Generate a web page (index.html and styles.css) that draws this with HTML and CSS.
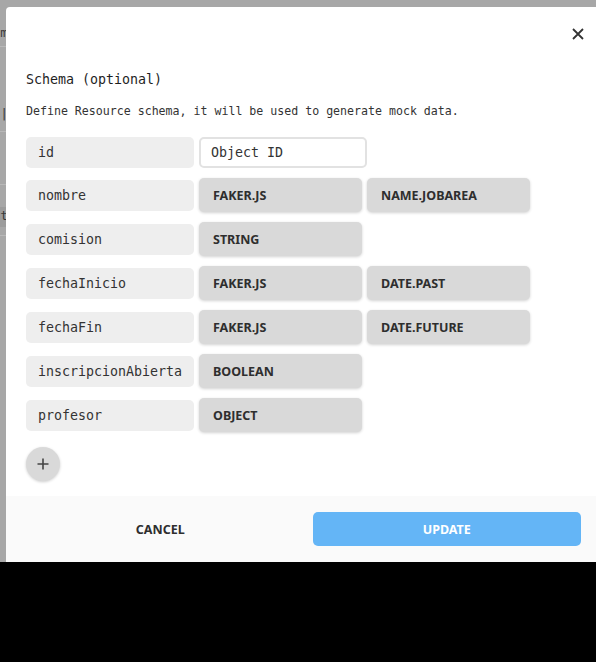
FILE: index.html
```html
<!DOCTYPE html>
<html>
<head>
<meta charset="utf-8">
<link rel="stylesheet" href="styles.css">
</head>
<body>
<div class="screen">
  <div class="strip">
    <div class="strip-item s1"><span>m</span></div>
    <div class="strip-line l1"></div>
    <div class="strip-item s2"><span>d|</span></div>
    <div class="strip-line l2"></div>
    <div class="strip-line l3"></div>
    <div class="strip-item s3"><span>t</span></div>
    <div class="strip-line l4"></div>
  </div>
  <div class="modal">
    <button class="close" aria-label="close">
      <svg width="14" height="14" viewBox="0 0 14 14"><path d="M2 2 L12 12 M12 2 L2 12" stroke="#333" stroke-width="1.8" fill="none"/></svg>
    </button>
    <div class="content">
      <h2 class="title">Schema (optional)</h2>
      <p class="desc">Define Resource schema, it will be used to generate mock data.</p>
      <div class="rows">
        <div class="row first">
          <div class="field">id</div>
          <div class="input">Object ID</div>
        </div>
        <div class="row">
          <div class="field">nombre</div>
          <div class="chip">FAKER.JS</div>
          <div class="chip">NAME.JOBAREA</div>
        </div>
        <div class="row">
          <div class="field">comision</div>
          <div class="chip">STRING</div>
        </div>
        <div class="row">
          <div class="field">fechaInicio</div>
          <div class="chip">FAKER.JS</div>
          <div class="chip">DATE.PAST</div>
        </div>
        <div class="row">
          <div class="field">fechaFin</div>
          <div class="chip">FAKER.JS</div>
          <div class="chip">DATE.FUTURE</div>
        </div>
        <div class="row">
          <div class="field">inscripcionAbierta</div>
          <div class="chip">BOOLEAN</div>
        </div>
        <div class="row">
          <div class="field">profesor</div>
          <div class="chip">OBJECT</div>
        </div>
      </div>
      <button class="add" aria-label="add">
        <svg width="14" height="14" viewBox="0 0 14 14"><path d="M7 1.5 V12.5 M1.5 7 H12.5" stroke="#444" stroke-width="1.6" fill="none"/></svg>
      </button>
    </div>
    <div class="footer">
      <button class="btn cancel">CANCEL</button>
      <button class="btn update">UPDATE</button>
    </div>
  </div>
</div>
</body>
</html>
```
FILE: styles.css
```css
html, body {
  margin: 0;
  padding: 0;
  background: #000;
  overflow: hidden;
}

.screen {
  display: flex;
  height: 562px;
  background: #a7a7a7;
}

.strip {
  width: 6px;
  flex: none;
  overflow: hidden;
  display: flex;
  flex-direction: column;
  font-family: "DejaVu Sans Mono", monospace;
  font-size: 13px;
  color: #3a3a3a;
}

.strip-item {
  display: flex;
  justify-content: flex-end;
  white-space: nowrap;
  height: 18px;
  line-height: 18px;
}

.strip-item span {
  margin-right: -2px;
}

.strip-line {
  height: 1px;
  background: #b8b8b8;
}

.s1 { margin-top: 24px; }
.l1 { margin-top: 4px; }
.s2 { margin-top: 58px; }
.l2 { margin-top: 8px; }
.l3 { margin-top: 52px; }
.s3 { margin-top: 22px; background: #9c9c9c; height: 20px; }
.l4 { margin-top: 8px; }

.modal {
  position: relative;
  flex: 1;
  margin-top: 7px;
  background: #fff;
  border-top-left-radius: 4px;
  display: flex;
  flex-direction: column;
}

.close {
  position: absolute;
  top: 20px;
  right: 11px;
  width: 14px;
  height: 14px;
  padding: 0;
  border: none;
  background: none;
  display: flex;
}

.content {
  flex: 1;
  padding: 63px 20px 0 20px;
  display: flex;
  flex-direction: column;
  align-items: flex-start;
}

.title {
  margin: 0;
  font-family: "DejaVu Sans Mono", monospace;
  font-size: 13.3px;
  line-height: 18px;
  font-weight: normal;
  color: #1e1e1e;
  padding-top: 1px;
}

.desc {
  margin: 14px 0 0 0;
  font-family: "DejaVu Sans Mono", monospace;
  font-size: 11.6px;
  line-height: 16px;
  color: #333;
}

.rows {
  margin-top: 18px;
  display: flex;
  flex-direction: column;
  gap: 10px;
}

.row {
  display: flex;
  align-items: center;
  gap: 5px;
  height: 34px;
}

.row.first {
  height: 31px;
}

.field {
  width: 168px;
  height: 31px;
  box-sizing: border-box;
  padding: 0 12px;
  background: #eeeeee;
  border-radius: 5px;
  display: flex;
  align-items: center;
  font-family: "DejaVu Sans Mono", monospace;
  font-size: 13.3px;
  color: #333;
  white-space: nowrap;
  overflow: hidden;
}

.input {
  width: 168px;
  height: 31px;
  box-sizing: border-box;
  padding: 0 10px;
  background: #fff;
  border: 2px solid #e2e2e2;
  border-radius: 5px;
  display: flex;
  align-items: center;
  font-family: "DejaVu Sans Mono", monospace;
  font-size: 13.3px;
  color: #333;
}

.chip {
  width: 163px;
  height: 34px;
  box-sizing: border-box;
  padding: 0 14px;
  background: #d9d9d9;
  border-radius: 5px;
  box-shadow: 0 1px 3px rgba(0, 0, 0, 0.18);
  display: flex;
  align-items: center;
  font-family: "Noto Sans", sans-serif;
  font-size: 12.5px;
  font-weight: 700;
  color: #2e2e2e;
}

.add {
  margin-top: 15px;
  width: 34px;
  height: 34px;
  border-radius: 50%;
  border: none;
  padding: 0;
  background: #d9d9d9;
  box-shadow: 0 1px 3px rgba(0, 0, 0, 0.2);
  display: flex;
  align-items: center;
  justify-content: center;
}

.footer {
  height: 66px;
  flex: none;
  background: #fafafa;
  display: flex;
  align-items: center;
  gap: 18px;
  padding: 0 15px 0 20px;
}

.btn {
  flex: 1;
  height: 34px;
  border: none;
  border-radius: 5px;
  font-family: "Noto Sans", sans-serif;
  font-size: 12.5px;
  font-weight: 700;
  cursor: pointer;
}

.cancel {
  background: transparent;
  color: #2e2e2e;
}

.update {
  background: #64b5f6;
  color: #fff;
}
```
